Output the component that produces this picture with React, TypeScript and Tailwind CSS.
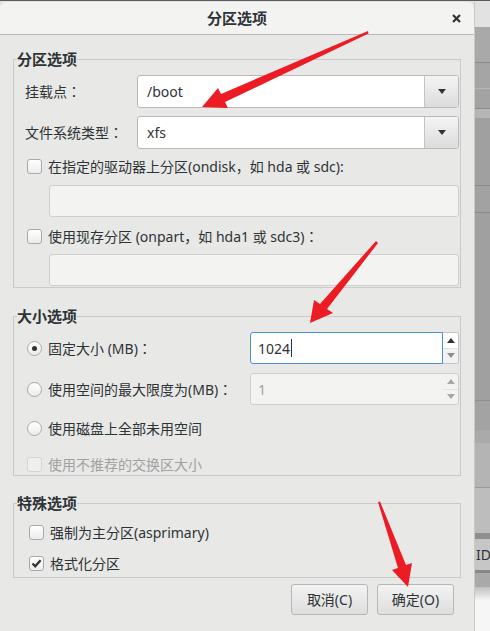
const strip = [
  "h-[26px] bg-[#e2e2e2]",
  "h-[35px] bg-[#a9a9a9]",
  "h-[1px] bg-[#8c8c8c]",
  "h-[25px] bg-[#a5a5a5]",
  "h-[1px] bg-[#b8b8b8]",
  "h-[19px] bg-[#a3a3a3]",
  "h-[1px] bg-[#8c8c8c]",
  "h-[9px] bg-[#b5b5b5]",
  "h-[67px] bg-[#a0a0a0]",
  "h-[1px] bg-[#8a8a8a]",
  "h-[26px] bg-[#a2a2a2]",
  "h-[1px] bg-[#8a8a8a]",
  "h-[187px] bg-[#a0a0a0]",
  "h-[1px] bg-[#8e8e8e]",
  "h-[29px] bg-[#a3a3a3]",
  "h-[13px] bg-[#aaaaaa]",
  "h-[44px] bg-[#b4b4b4]",
  "h-[1px] bg-[#9a9a9a]",
  "h-[45px] bg-[#bdbdbd]",
  "h-[6px] bg-[#8f8f8f]",
];

function Check({ checked, disabled }: { checked?: boolean; disabled?: boolean }) {
  return (
    <span
      className={
        "w-[15px] h-[15px] shrink-0 rounded-[3px] border flex items-center justify-center " +
        (disabled
          ? "border-[#d4d4d4] bg-[#efefef]"
          : "border-[#a9a9a9] bg-linear-to-b from-white to-[#ececec]")
      }
    >
      {checked && (
        <svg width="11" height="11" viewBox="0 0 11 11">
          <path d="M1.5 5.5 L4.2 8.3 L9.6 2.2" fill="none" stroke="#2e3436" strokeWidth="2.3" />
        </svg>
      )}
    </span>
  );
}

function Radio({ on }: { on?: boolean }) {
  return (
    <span className="w-[15px] h-[15px] shrink-0 rounded-full border border-[#a9a9a9] bg-linear-to-b from-white to-[#ececec] flex items-center justify-center">
      {on && <span className="w-[5px] h-[5px] rounded-full bg-[#2e3436]" />}
    </span>
  );
}

function Tri({ up, color }: { up?: boolean; color: string }) {
  return (
    <svg width="8" height="5" viewBox="0 0 8 5">
      <path d={up ? "M0 5 L4 0 L8 5 Z" : "M0 0 L8 0 L4 5 Z"} fill={color} />
    </svg>
  );
}

function Combo({ value }: { value: string }) {
  return (
    <div className="flex-1 h-[33px] flex rounded-[3px] border border-[#b9b9b9] bg-white overflow-hidden">
      <div className="flex-1 flex items-center pl-[9px] text-[14px]">{value}</div>
      <div className="w-[34px] border-l border-[#c4c4c4] bg-linear-to-b from-[#f4f4f4] to-[#dcdcdc] flex items-center justify-center">
        <Tri color="#2e3436" />
      </div>
    </div>
  );
}

function Legend({ children }: { children: string }) {
  return <legend className="ml-[3px] px-0 text-[15px] font-bold leading-[20px]">{children}</legend>;
}

export default function App() {
  return (
    <div className="relative w-[490px] h-[631px] overflow-hidden bg-[#5c5c5c] text-[#2e3436] font-['Noto_Sans','Noto_Sans_CJK_JP',sans-serif]">
      <div className="h-[1px]" />
      <div className="flex h-[630px] bg-[#e2e2e2]">
        <div className="w-[475px] flex flex-col mt-[1px] border-r border-[#c9c9c9]">
          <div className="h-[33px] shrink-0 flex items-center rounded-t-[6px] bg-[#f3f3f2] border-b border-[#b8b8b8]">
            <div className="w-[36px]" />
            <div className="flex-1 text-center text-[15px] font-bold">分区选项</div>
            <div className="w-[36px] flex items-center justify-center">
              <svg width="9" height="9" viewBox="0 0 9 9">
                <path d="M1 1 L8 8 M8 1 L1 8" stroke="#2e3436" strokeWidth="2.2" />
              </svg>
            </div>
          </div>

          <div className="flex-1 bg-[#e8e8e7] px-[13px] pt-[14px] text-[14px]">
            <fieldset className="border border-[#c9c9c9] pr-[1px] pb-[1px]">
              <Legend>分区选项</Legend>
              <div className="mt-[6px] flex items-center">
                <div className="w-[123px] pl-[11px]">挂载点：</div>
                <Combo value="/boot" />
              </div>
              <div className="mt-[8px] flex items-center">
                <div className="w-[123px] pl-[11px]">文件系统类型：</div>
                <Combo value="xfs" />
              </div>
              <div className="mt-[7px] h-[20px] flex items-center gap-[6px] pl-[13px]">
                <Check />
                <span>在指定的驱动器上分区(ondisk，如 hda 或 sdc):</span>
              </div>
              <div className="mt-[9px] ml-[35px] h-[32px] rounded-[3px] border border-[#cfcfcf] bg-[#f3f3f2]" />
              <div className="mt-[9px] h-[20px] flex items-center gap-[6px] pl-[13px]">
                <Check />
                <span>使用现存分区 (onpart，如 hda1 或 sdc3)：</span>
              </div>
              <div className="mt-[8px] ml-[35px] h-[32px] rounded-[3px] border border-[#cfcfcf] bg-[#f3f3f2]" />
            </fieldset>

            <fieldset className="mt-[18px] border border-[#c9c9c9] pr-[1px] pb-[1px]">
              <Legend>大小选项</Legend>
              <div className="mt-[6px] flex items-center">
                <div className="w-[236px] pl-[13px] flex items-center gap-[6px]">
                  <Radio on />
                  <span>固定大小 (MB)：</span>
                </div>
                <div className="flex-1 h-[32px] flex">
                  <div className="flex-1 flex items-center pl-[7px] rounded-l-[3px] border border-[#4a90d9] bg-white">
                    <span>1024</span>
                    <span className="ml-[1px] w-[1px] h-[18px] bg-[#2e3436]" />
                  </div>
                  <div className="w-[16px] flex flex-col rounded-r-[3px] border border-l-0 border-[#c4c4c4] overflow-hidden">
                    <div className="flex-1 bg-white flex items-center justify-center">
                      <Tri up color="#2e3436" />
                    </div>
                    <div className="flex-1 bg-[#f2f2f2] border-t border-[#e2e2e2] flex items-center justify-center">
                      <Tri color="#8f8f8f" />
                    </div>
                  </div>
                </div>
              </div>
              <div className="mt-[9px] flex items-center">
                <div className="w-[236px] pl-[13px] flex items-center gap-[6px]">
                  <Radio />
                  <span>使用空间的最大限度为(MB)：</span>
                </div>
                <div className="flex-1 h-[32px] flex rounded-[3px] border border-[#cfcfcf] bg-[#f3f3f2] overflow-hidden">
                  <div className="flex-1 flex items-center pl-[7px] text-[#a2a2a2]">1</div>
                  <div className="w-[15px] flex flex-col">
                    <div className="flex-1 flex items-center justify-center">
                      <Tri up color="#a8a8a8" />
                    </div>
                    <div className="flex-1 border-t border-[#e2e2e2] flex items-center justify-center">
                      <Tri color="#a8a8a8" />
                    </div>
                  </div>
                </div>
              </div>
              <div className="mt-[13px] h-[20px] pl-[13px] flex items-center gap-[6px]">
                <Radio />
                <span>使用磁盘上全部未用空间</span>
              </div>
              <div className="mt-[16px] h-[20px] pl-[13px] flex items-center gap-[6px] text-[#a2a2a2]">
                <Check disabled />
                <span>使用不推荐的交换区大小</span>
              </div>
            </fieldset>

            <fieldset className="mt-[17px] border border-[#c9c9c9] pb-[4px]">
              <Legend>特殊选项</Legend>
              <div className="mt-[9px] h-[20px] pl-[15px] flex items-center gap-[6px]">
                <Check />
                <span>强制为主分区(asprimary)</span>
              </div>
              <div className="mt-[11px] h-[20px] pl-[15px] flex items-center gap-[6px]">
                <Check checked />
                <span>格式化分区</span>
              </div>
            </fieldset>

            <div className="mt-[6px] pr-[7px] flex justify-end gap-[9px]">
              <button className="w-[77px] h-[31px] rounded-[3px] border border-[#b7b7b7] bg-linear-to-b from-[#f3f3f3] to-[#dedede] text-[14px]">
                取消(C)
              </button>
              <button className="w-[77px] h-[31px] rounded-[3px] border border-[#b7b7b7] bg-linear-to-b from-[#f3f3f3] to-[#dedede] text-[14px]">
                确定(O)
              </button>
            </div>
          </div>
        </div>

        <div className="w-[15px] flex flex-col overflow-hidden">
          {strip.map((c, i) => (
            <div key={i} className={c} />
          ))}
          <div className="h-[31px] bg-[#c6c6c6] flex items-center pl-[1px] text-[14px] whitespace-nowrap">ID</div>
          <div className="h-[3px] bg-[#888888]" />
          <div className="h-[14px] bg-[#a9a9a9]" />
          <div className="h-[13px] bg-linear-to-b from-[#c0c0c0] to-[#f4f4f4]" />
          <div className="flex-1 bg-[#f6f6f6]" />
        </div>
      </div>

      <svg className="absolute inset-0 pointer-events-none" width="490" height="631" viewBox="0 0 490 631">
        <polygon points="368,31 221,94 218,88 202,107 228,108 225,102 368.5,33.5" fill="#ec1c24" />
        <polygon points="376,241 320,304 314,300 310,323 333,313 327,309 378,243" fill="#ec1c24" />
        <polygon points="378,502 380,501.5 406,565 412,563 408,587 392,570 398,568" fill="#ec1c24" />
      </svg>
    </div>
  );
}
